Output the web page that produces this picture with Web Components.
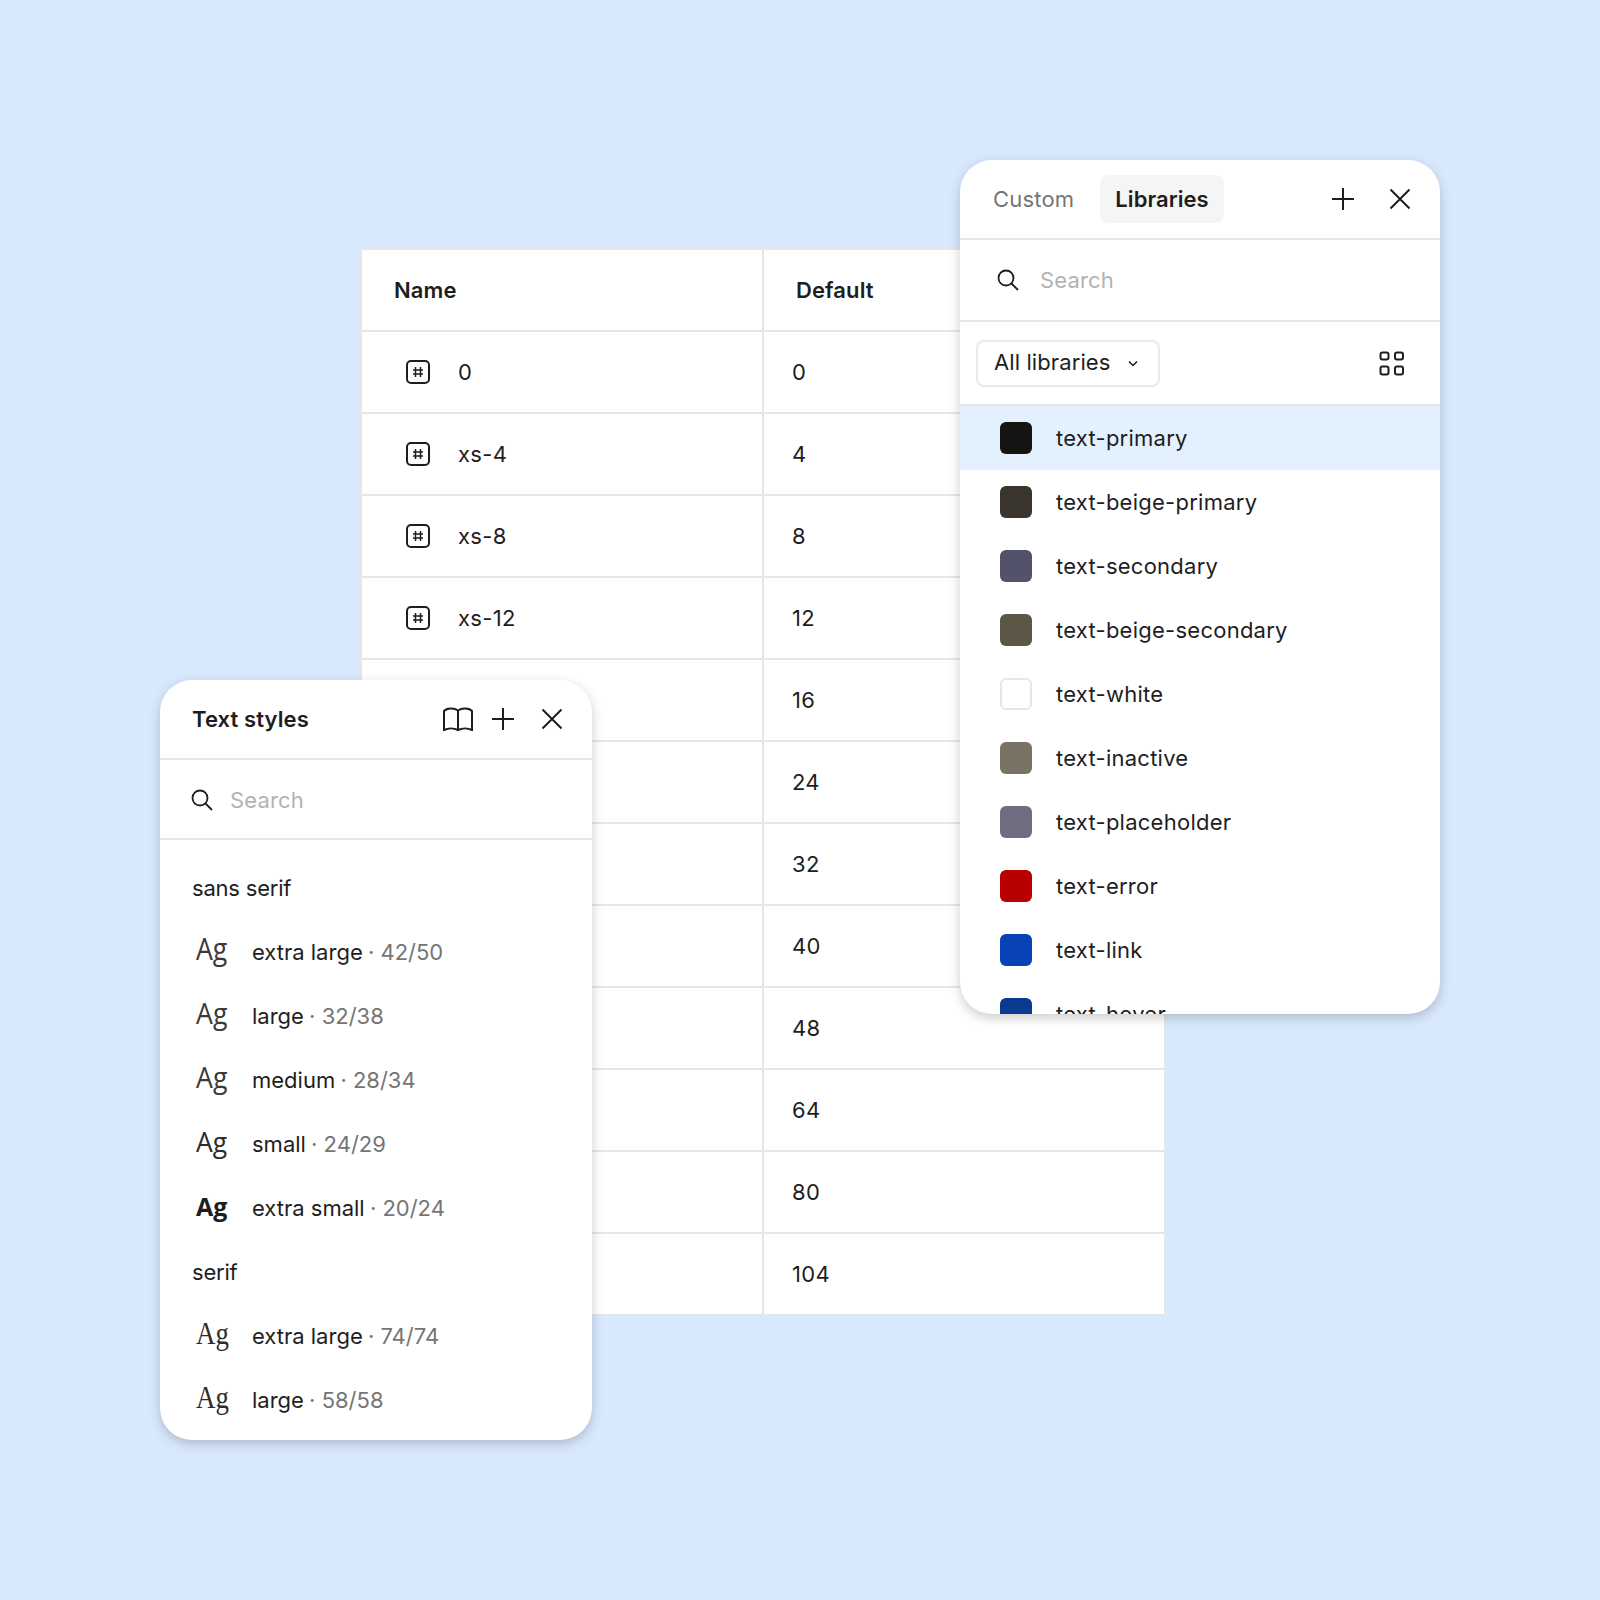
<!DOCTYPE html>
<html>
<head>
<meta charset="utf-8">
<title>Tokens</title>
<style>
  html, body { margin: 0; padding: 0; }
  body { background: #d9e9fd; font-family: Inter, "Liberation Sans", sans-serif; }
</style>
</head>
<body>
<design-stage>
  <token-table></token-table>
  <styles-panel></styles-panel>
  <colors-panel></colors-panel>
</design-stage>

<script>
const ICONS = {
  plus: `<svg width="24" height="24" viewBox="0 0 24 24" fill="none" stroke="#1e1e1e" stroke-width="2"><path d="M12 1v22M1 12h22"/></svg>`,
  close: `<svg width="24" height="24" viewBox="0 0 24 24" fill="none" stroke="#1e1e1e" stroke-width="2"><path d="M2.500 2.500l19 19M21.500 2.500l-19 19"/></svg>`,
  search: `<svg width="24" height="24" viewBox="0 0 24 24" fill="none" stroke="#1e1e1e" stroke-width="1.800"><circle cx="10" cy="10" r="7.500"/><path d="M15.500 15.500l6.500 6.500"/></svg>`,
  book: `<svg width="30" height="24" viewBox="0 0 30 24" fill="none" stroke="#1e1e1e" stroke-width="2"><path d="M1 23V4C3.500 1 11 0.500 15 3.500C19 0.500 26.500 1 29 4V23C25 21 19 21 15 23C11 21 5 21 1 23ZM15 3.500V23"/></svg>`,
  grid: `<svg width="26" height="26" viewBox="0 0 26 26" fill="none" stroke="#1e1e1e" stroke-width="2"><rect x="1.500" y="2.500" width="8" height="7" rx="2"/><rect x="16" y="2.500" width="8" height="7" rx="2"/><rect x="1.500" y="16.500" width="8" height="8" rx="2"/><rect x="16" y="16.500" width="8" height="8" rx="2"/></svg>`,
  chevron: `<svg width="10" height="8" viewBox="0 0 10 8" fill="none" stroke="#1e1e1e" stroke-width="1.500"><path d="M1 1.500l4 4 4-4"/></svg>`,
  number: `<svg width="24" height="24" viewBox="0 0 24 24" fill="none" stroke="#1e1e1e"><rect x="1" y="1" width="22" height="22" rx="4" stroke-width="2"/><path d="M9.500 7v10M14.500 7v10M7 10h10M7 14h10" stroke-width="1.500"/></svg>`
}

class DesignStage extends HTMLElement {
  constructor () {
    super()
    this.attachShadow({ mode: 'open' }).innerHTML = `
    <style>
      :host { display: grid; width: 1600px; height: 1600px; overflow: hidden; align-items: start; justify-items: start; }
      ::slotted(*) { grid-area: 1 / 1; }
    </style>
    <slot></slot>`
  }
}

class TokenTable extends HTMLElement {
  connectedCallback () {
    const rows = [['0', '0'], ['xs-4', '4'], ['xs-8', '8'], ['xs-12', '12'], ['', '16'], ['', '24'], ['', '32'], ['', '40'], ['', '48'], ['', '64'], ['', '80'], ['', '104']]
    this.attachShadow({ mode: 'open' }).innerHTML = `
    <style>
      :host { display: block; margin: 248px 0 0 360px; width: 806px; background: #fff; border: solid #e6e6e6; border-width: 2px 2px 0 2px; box-sizing: border-box; color: #1e1e1e; font-size: 22px; letter-spacing: .3px; }
      .row { display: grid; grid-template-columns: 402px 1fr; height: 82px; box-sizing: border-box; border-bottom: 2px solid #e6e6e6; }
      .cell { display: flex; align-items: center; }
      .name { border-right: 2px solid #e6e6e6; padding-left: 32px; gap: 28px; }
      .name svg { margin-left: 12px; }
      .value { padding-left: 28px; }
      .head { font-weight: 600; letter-spacing: .1px; }
      .head .value { padding-left: 32px; }
    </style>
    <div class="row head"><div class="cell name">Name</div><div class="cell value">Default</div></div>
    ${rows.map(([n, v]) => `<div class="row"><div class="cell name">${n ? ICONS.number + `<span>${n}</span>` : ''}</div><div class="cell value">${v}</div></div>`).join('')}`
  }
}

class SearchBar extends HTMLElement {
  constructor () {
    super()
    this.attachShadow({ mode: 'open' }).innerHTML = `
    <style>
      :host { display: flex; align-items: center; box-sizing: border-box; border-bottom: 2px solid #e6e6e6; color: #b3b3b3; font-size: 22px; letter-spacing: .15px; }
      svg { flex: none; }
    </style>
    ${ICONS.search}<span>Search</span>`
  }
}

class StylesPanel extends HTMLElement {
  connectedCallback () {
    // each Ag sample has its own height in the reference, the width stays the same
    const row = (name, size, look) => `<div class="style"><span class="ag ${look}"><b>Ag</b></span><span class="label">${name} <i>· ${size}</i></span></div>`
    this.attachShadow({ mode: 'open' }).innerHTML = `
    <style>
      :host { display: block; margin: 680px 0 0 160px; width: 432px; height: 760px; background: #fff; border-radius: 32px; overflow: hidden; box-shadow: 0 4px 12px rgba(0,0,0,.2); color: #1e1e1e; font-size: 22px; }
      header { display: flex; align-items: center; height: 80px; box-sizing: border-box; padding: 0 28px 0 32px; border-bottom: 2px solid #e6e6e6; }
      h2 { margin: 0; font-size: 22px; font-weight: 600; flex: 1; letter-spacing: .1px; }
      .icons { display: flex; align-items: center; gap: 18px; }
      .icons svg:last-child { margin-left: 7px; }
      search-bar { height: 80px; padding: 1px 0 0 30px; gap: 16px; }
      .list { padding-top: 16px; }
      .group { display: flex; align-items: center; height: 64px; padding-left: 32px; letter-spacing: -.2px; }
      .style { display: flex; align-items: baseline; height: 64px; padding-left: 32px; }
      .label { line-height: 64px; }
      .ag { width: 60px; padding-left: 4px; box-sizing: border-box; line-height: 1; font-size: 31px; font-family: "Open Sans", sans-serif; color: #3a3a3a; }
      .ag b { display: inline-block; font-weight: 400; transform: scaleX(.86); transform-origin: 0 50%; }
      .ag.lg { font-size: 30px; }
      .ag.lg b { transform: scaleX(.89); }
      .ag.sm { font-size: 27px; color: #2c2c2c; }
      .ag.sm b { transform: scaleX(.98); }
      .ag.xs { font-size: 25px; color: #1e1e1e; }
      .ag.xs b { font-weight: 700; transform: scaleX(1); }
      .ag.serif { font-family: "Liberation Serif", serif; font-size: 32px; color: #2c2c2c; }
      .ag.serif b { transform: scaleX(.84); }
      i { font-style: normal; color: #757575; margin-left: -1px; }
    </style>
    <header><h2>Text styles</h2><div class="icons">${ICONS.book}${ICONS.plus}${ICONS.close}</div></header>
    <search-bar></search-bar>
    <div class="list">
      <div class="group">sans serif</div>
      ${row('extra large', '42/50', '')}
      ${row('large', '32/38', 'lg')}
      ${row('medium', '28/34', 'lg')}
      ${row('small', '24/29', 'sm')}
      ${row('extra small', '20/24', 'xs')}
      <div class="group">serif</div>
      ${row('extra large', '74/74', 'serif')}
      ${row('large', '58/58', 'serif')}
    </div>`
  }
}

class ColorsPanel extends HTMLElement {
  connectedCallback () {
    const colors = [['text-primary', '#141412'], ['text-beige-primary', '#3a362e'], ['text-secondary', '#52526a'], ['text-beige-secondary', '#5c5647'], ['text-white', '#ffffff'], ['text-inactive', '#7a7264'], ['text-placeholder', '#6e6e80'], ['text-error', '#b80000'], ['text-link', '#0743b4'], ['text-hover', '#0b3a8f']]
    this.attachShadow({ mode: 'open' }).innerHTML = `
    <style>
      :host { display: block; margin: 160px 0 0 960px; width: 480px; height: 854px; background: #fff; border-radius: 32px; overflow: hidden; box-shadow: 0 4px 12px rgba(0,0,0,.2); color: #1e1e1e; font-size: 22px; }
      header { display: flex; align-items: center; height: 80px; box-sizing: border-box; padding: 0 28px 0 18px; border-bottom: 2px solid #e6e6e6; }
      .tab { padding: 0 15px; height: 48px; display: flex; align-items: center; color: #757575; border-radius: 8px; letter-spacing: .2px; }
      .tab.on { background: #f5f5f5; color: #1e1e1e; font-weight: 600; margin-left: 11px; letter-spacing: .05px; }
      .icons { margin-left: auto; display: flex; align-items: center; gap: 33px; }
      search-bar { height: 82px; padding-left: 36px; gap: 20px; }
      .filter { display: flex; align-items: center; justify-content: space-between; height: 84px; box-sizing: border-box; padding: 0 35px 0 16px; border-bottom: 2px solid #e6e6e6; }
      .select { display: flex; align-items: center; gap: 18px; height: 47px; margin-top: 1px; box-sizing: border-box; padding: 0 20px 3px 16px; border: 2px solid #e9e9e9; border-radius: 8px; letter-spacing: .1px; }
      .select svg { margin-top: 3px; }
      .item { display: flex; align-items: center; gap: 24px; height: 64px; padding-left: 40px; letter-spacing: .25px; }
      .item.on { background: #e3f1ff; }
      .swatch { width: 32px; height: 32px; border-radius: 6px; box-sizing: border-box; }
      .swatch.white { border: 2px solid #e6e6e6; }
    </style>
    <header><div class="tab">Custom</div><div class="tab on">Libraries</div><div class="icons">${ICONS.plus}${ICONS.close}</div></header>
    <search-bar></search-bar>
    <div class="filter"><div class="select">All libraries ${ICONS.chevron}</div>${ICONS.grid}</div>
    ${colors.map(([n, c], i) => `<div class="item ${i ? '' : 'on'}"><div class="swatch ${c === '#ffffff' ? 'white' : ''}" style="background:${c}"></div><span>${n}</span></div>`).join('')}`
  }
}

customElements.define('design-stage', DesignStage)
customElements.define('token-table', TokenTable)
customElements.define('search-bar', SearchBar)
customElements.define('styles-panel', StylesPanel)
customElements.define('colors-panel', ColorsPanel)
</script>
</body>
</html>
